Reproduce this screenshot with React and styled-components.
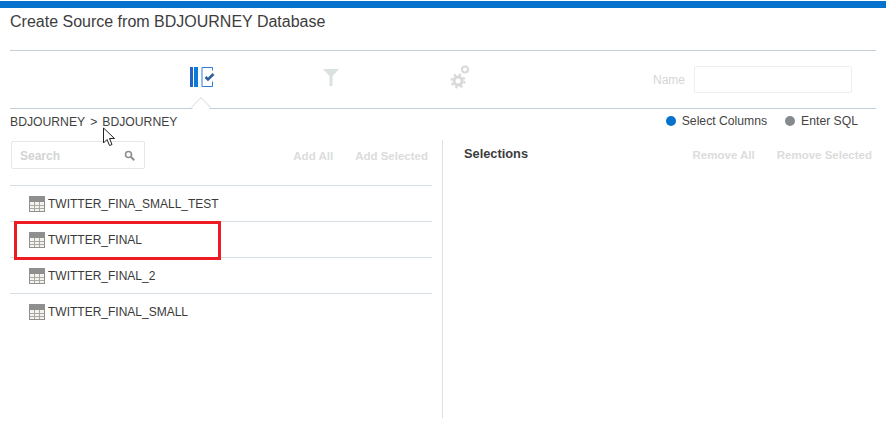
import React from "react";
import styled, { createGlobalStyle } from "styled-components";

const GlobalStyle = createGlobalStyle`
  html, body {
    margin: 0;
    padding: 0;
    background: #fff;
  }
  * {
    box-sizing: border-box;
  }
`;

const Page = styled.div`
  position: relative;
  width: 886px;
  height: 422px;
  overflow: hidden;
  background: #fff;
  font-family: "Liberation Sans", Arial, sans-serif;
  color: #333;
`;

const TopBar = styled.div`
  height: 7px;
  margin-top: 1px;
  background: #0572ce;
`;

const Title = styled.h1`
  margin: 0 10px;
  height: 42px;
  padding-top: 5px;
  font-size: 16px;
  line-height: 18px;
  font-weight: normal;
  color: #3d3d3d;
`;

const Wizard = styled.div`
  position: relative;
  display: flex;
  align-items: center;
  height: 59px;
  margin: 0 10px;
  border-top: 1px solid #c4ced7;
  border-bottom: 1px solid #c4ced7;
  padding-left: 127px;
`;

const Step = styled.div`
  position: relative;
  width: 129px;
  height: 100%;
  display: flex;
  align-items: flex-start;
  justify-content: center;
  padding-top: ${(props) => props.$top}px;
  opacity: ${(props) => (props.$dim ? 0.32 : 1)};
`;

const StepArrow = styled.span`
  position: absolute;
  left: 57px;
  bottom: -6px;
  width: 14px;
  height: 14px;
  background: #fff;
  border-left: 1px solid #dfe4e8;
  border-top: 1px solid #dfe4e8;
  transform: rotate(45deg);
`;

const NameField = styled.div`
  margin-left: auto;
  margin-right: 24px;
  display: flex;
  align-items: center;
  gap: 9px;
  font-size: 12px;
  color: #d6d6d6;
`;

const NameInput = styled.div`
  width: 158px;
  height: 27px;
  border: 1px solid #eceff1;
  border-radius: 2px;
`;

const InfoRow = styled.div`
  display: flex;
  align-items: center;
  justify-content: space-between;
  height: 25px;
  padding: 0 28px 0 10px;
  font-size: 12px;
`;

const Breadcrumb = styled.div`
  display: flex;
  gap: 5px;
  font-size: 12.2px;
  color: #3f3f3f;
`;

const RadioGroup = styled.div`
  display: flex;
  gap: 18px;
  padding-bottom: 2px;
`;

const Radio = styled.div`
  display: flex;
  align-items: center;
  gap: 6px;
  font-size: 12.2px;
  color: #444;
`;

const Dot = styled.span`
  width: 10px;
  height: 10px;
  border-radius: 50%;
  background: ${(props) => (props.$on ? "#0572ce" : "#858a8e")};
`;

const Columns = styled.div`
  display: flex;
  height: 278px;
  margin-top: 6px;
`;

const LeftPane = styled.div`
  width: 443px;
  padding: 1px 10px 0 10px;
  border-right: 1px solid #d9e1e8;
`;

const RightPane = styled.div`
  flex: 1;
  padding: 0 13px 0 21px;
`;

const Toolbar = styled.div`
  display: flex;
  align-items: center;
  height: 28px;
`;

const SearchBox = styled.div`
  display: flex;
  align-items: center;
  justify-content: space-between;
  width: 134px;
  height: 28px;
  margin-left: 1px;
  padding: 1px 9px 0 8px;
  border: 1px solid #e4e8eb;
  border-radius: 2px;
  font-size: 12px;
  font-weight: bold;
  color: #d3d3d3;
`;

const Actions = styled.div`
  margin-left: auto;
  display: flex;
  gap: 22px;
  padding-top: 1px;
  padding-right: ${(props) => props.$pad}px;
`;

const Action = styled.span`
  font-size: 11.5px;
  font-weight: bold;
  color: #dcdcdc;
`;

const Heading = styled.h2`
  margin: 0;
  padding-bottom: 1px;
  font-size: 12.8px;
  font-weight: bold;
  color: #3d3d3d;
`;

const TableList = styled.ul`
  list-style: none;
  margin: 16px 0 0;
  padding: 0;
`;

const Row = styled.li`
  position: relative;
  display: flex;
  align-items: center;
  gap: 3px;
  height: 36px;
  padding-left: 19px;
  font-size: 12px;
  color: #3a3a3a;
  border-top: 1px solid #d6dde3;
`;

const Highlight = styled.span`
  position: absolute;
  z-index: 1;
  left: 4px;
  top: -1px;
  width: 207px;
  height: 39px;
  border: 3px solid #ed1c24;
`;

const Cursor = styled.svg`
  position: absolute;
  left: 102px;
  top: 127px;
`;

const ColumnsIcon = () => (
  <svg width="26" height="22" viewBox="0 0 26 22">
    <rect x="1" y="1" width="3" height="20" fill="#2561c9" />
    <rect x="5" y="1" width="4" height="20" fill="#0a7ad8" />
    <path d="M23.500 1.500h-10.500v19h10.500v-5M23.500 1.500v3" fill="none" stroke="#2f7cd6" strokeWidth="1" />
    <path d="M16.500 11l2.500 2.500 5.500-5.500" fill="none" stroke="#2b5f9e" strokeWidth="2.600" />
  </svg>
);

const FilterIcon = () => (
  <svg width="16" height="17" viewBox="0 0 16 17">
    <path d="M0 0h16l-6.500 7v10h-3V7z" fill="#8fa69e" />
  </svg>
);

const GearIcon = () => (
  <svg width="20" height="24" viewBox="0 0 20 24">
    <circle cx="8" cy="16" r="4" fill="none" stroke="#8b8b8b" strokeWidth="3" />
    <circle cx="8" cy="16" r="6.500" fill="none" stroke="#8b8b8b" strokeWidth="2" strokeDasharray="2.500 2.600" />
    <circle cx="15" cy="4.500" r="3" fill="none" stroke="#8b8b8b" strokeWidth="2" />
  </svg>
);

const SearchIcon = () => (
  <svg width="11" height="11" viewBox="0 0 11 11">
    <circle cx="4.500" cy="4.500" r="3" fill="none" stroke="#8f8f8f" strokeWidth="1.600" />
    <path d="M6.800 6.800l3.400 3.400" stroke="#8f8f8f" strokeWidth="2" />
  </svg>
);

const TableIcon = () => (
  <svg width="16" height="16" viewBox="0 0 16 16">
    <rect x="0" y="0" width="16" height="16" fill="#8f8f8f" />
    <rect x="1" y="6" width="14" height="9" fill="#f4f2ea" />
    <path d="M5.500 6v9M10.500 6v9M1 9.500h14M1 12.500h14" stroke="#a8a8a8" strokeWidth="1" />
  </svg>
);

const tables = [
  "TWITTER_FINA_SMALL_TEST",
  "TWITTER_FINAL",
  "TWITTER_FINAL_2",
  "TWITTER_FINAL_SMALL",
];

export default function App() {
  return (
    <Page>
      <GlobalStyle />
      <TopBar />
      <Title>Create Source from BDJOURNEY Database</Title>
      <Wizard>
        <Step $top={15}>
          <ColumnsIcon />
          <StepArrow />
        </Step>
        <Step $top={18} $dim>
          <FilterIcon />
        </Step>
        <Step $top={14} $dim>
          <GearIcon />
        </Step>
        <NameField>
          Name
          <NameInput />
        </NameField>
      </Wizard>
      <InfoRow>
        <Breadcrumb>
          <span>BDJOURNEY</span>
          <span>&gt;</span>
          <span>BDJOURNEY</span>
        </Breadcrumb>
        <RadioGroup>
          <Radio>
            <Dot $on />
            Select Columns
          </Radio>
          <Radio>
            <Dot />
            Enter SQL
          </Radio>
        </RadioGroup>
      </InfoRow>
      <Columns>
        <LeftPane>
          <Toolbar>
            <SearchBox>
              Search
              <SearchIcon />
            </SearchBox>
            <Actions $pad={4}>
              <Action>Add All</Action>
              <Action>Add Selected</Action>
            </Actions>
          </Toolbar>
          <TableList>
            {tables.map((name, i) => (
              <Row key={name}>
                <TableIcon />
                {name}
                {i === 1 && <Highlight />}
              </Row>
            ))}
          </TableList>
        </LeftPane>
        <RightPane>
          <Toolbar>
            <Heading>Selections</Heading>
            <Actions $pad={1}>
              <Action>Remove All</Action>
              <Action>Remove Selected</Action>
            </Actions>
          </Toolbar>
        </RightPane>
      </Columns>
      <Cursor width="14" height="21" viewBox="0 0 14 21">
        <path d="M1.500 1v15l3.500-3.500 2.500 6 2.500-1-2.500-6h5z" fill="#fff" stroke="#222" strokeWidth="1" />
      </Cursor>
    </Page>
  );
}
